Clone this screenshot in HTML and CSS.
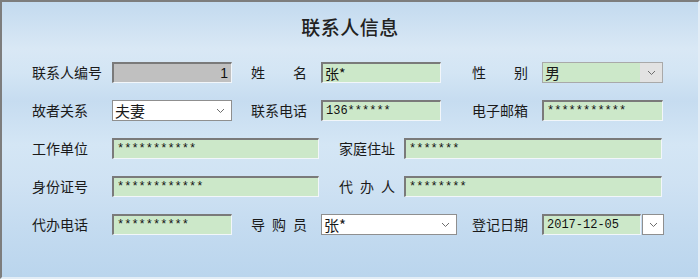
FILE: index.html
```html
<!DOCTYPE html>
<html lang="zh-CN">
<head>
  <meta charset="UTF-8" />
  <title>联系人信息</title>
  <link rel="stylesheet" href="styles.css">
</head>
<body>
  <div class="window">
    <h1 class="title">联系人信息</h1>

    <div class="form">
      <!-- ligne 1 -->
      <div class="row">
        <div class="c1">
          <span class="lbl">联系人编号</span>
          <input class="box gray num w120" type="text" value="1" readonly />
        </div>
        <div class="c2">
          <span class="lbl lbl2"><span class="jst">姓名</span></span>
          <input class="box green cjk w120" type="text" value="张*" readonly />
        </div>
        <div class="c3">
          <span class="lbl lbl2"><span class="jst">性别</span></span>
          <div class="combo green-combo w121">
            <span class="combo-text">男</span>
            <span class="combo-btn gray-btn">
              <svg width="9" height="6" viewBox="0 0 9 6"><path d="M1 1 L4.5 4.5 L8 1" fill="none" stroke="#6d6d6d" stroke-width="1"/></svg>
            </span>
          </div>
        </div>
      </div>

      <!-- ligne 2 -->
      <div class="row">
        <div class="c1">
          <span class="lbl">故者关系</span>
          <div class="combo white-combo w120">
            <span class="combo-text">夫妻</span>
            <span class="combo-btn">
              <svg width="9" height="6" viewBox="0 0 9 6"><path d="M1 1 L4.5 4.5 L8 1" fill="none" stroke="#6d6d6d" stroke-width="1"/></svg>
            </span>
          </div>
        </div>
        <div class="c2">
          <span class="lbl lbl2">联系电话</span>
          <input class="box green w120" type="text" value="136******" readonly />
        </div>
        <div class="c3">
          <span class="lbl lbl2">电子邮箱</span>
          <input class="box green w121" type="text" value="***********" readonly />
        </div>
      </div>

      <!-- ligne 3 -->
      <div class="row">
        <div class="cw">
          <span class="lbl">工作单位</span>
          <input class="box green w207" type="text" value="***********" readonly />
        </div>
        <div class="cw2">
          <span class="lbl lbl3">家庭住址</span>
          <input class="box green w258" type="text" value="*******" readonly />
        </div>
      </div>

      <!-- ligne 4 -->
      <div class="row">
        <div class="cw">
          <span class="lbl">身份证号</span>
          <input class="box green w207" type="text" value="************" readonly />
        </div>
        <div class="cw2">
          <span class="lbl lbl3"><span class="jst">代办人</span></span>
          <input class="box green w258" type="text" value="********" readonly />
        </div>
      </div>

      <!-- ligne 5 -->
      <div class="row">
        <div class="c1">
          <span class="lbl">代办电话</span>
          <input class="box green w120" type="text" value="**********" readonly />
        </div>
        <div class="c2">
          <span class="lbl lbl2"><span class="jst">导购员</span></span>
          <div class="combo white-combo w136">
            <span class="combo-text">张*</span>
            <span class="combo-btn">
              <svg width="9" height="6" viewBox="0 0 9 6"><path d="M1 1 L4.5 4.5 L8 1" fill="none" stroke="#6d6d6d" stroke-width="1"/></svg>
            </span>
          </div>
        </div>
        <div class="c3">
          <span class="lbl lbl2">登记日期</span>
          <input class="box green w99" type="text" value="2017-12-05" readonly />
          <span class="date-btn">
            <svg width="9" height="6" viewBox="0 0 9 6"><path d="M1 1 L4.5 4.5 L8 1" fill="none" stroke="#6d6d6d" stroke-width="1"/></svg>
          </span>
        </div>
      </div>
    </div>
  </div>
</body>
</html>
```

FILE: styles.css
```css
body {
  margin: 0;
  font-family: "Noto Sans CJK SC", "Liberation Sans", sans-serif;
  color: #1a1a1a;
}
.window {
  box-sizing: border-box;
  width: 700px;
  height: 279px;
  border-style: solid;
  border-width: 2px 2px 2px 2px;
  border-color: #7d7d7d #e3edf6 #e3edf6 #7d7d7d;
  background: linear-gradient(to bottom,
    #c3daef 0%, #d9e8f5 17%, #d3e5f4 26%, #c6dcf0 36%,
    #d4e6f5 52%, #cfe2f3 66%, #c4dbf0 82%, #bad5ed 100%);
}
.title {
  margin: 10px 0 0 0;
  height: 30px;
  line-height: 30px;
  text-align: center;
  font-size: 19px;
  font-weight: 500;
  color: #222;
  letter-spacing: 0.5px;
}
.form {
  margin-top: 20px;
  padding-left: 30px;
  display: flex;
  flex-direction: column;
  gap: 17px;
}
.row {
  display: flex;
  height: 21px;
  align-items: center;
}
.c1, .c2, .c3, .cw, .cw2 {
  display: flex;
  align-items: center;
  height: 21px;
}
.c1 { width: 219px; }
.c2 { width: 221px; }
.cw { width: 307px; }
.lbl {
  width: 80px;
  font-size: 14px;
  line-height: 21px;
  white-space: nowrap;
}
.lbl2 { width: 70px; }
.lbl3 { width: 65px; }
.jst {
  display: inline-block;
  width: 56px;
  text-align: justify;
  text-align-last: justify;
}
.box {
  box-sizing: border-box;
  height: 21px;
  margin: 0;
  padding: 0 3px;
  border-style: solid;
  border-width: 2px 1px 1px 2px;
  border-color: #7a7a7a #f2f6fa #f2f6fa #7a7a7a;
  font-family: "Liberation Mono", "Noto Sans CJK SC", monospace;
  font-size: 12px;
  color: #111;
  outline: none;
}
.green { background-color: #cce8c9; }
.gray { background-color: #c0c0c0; }
.num { text-align: right; font-family: "Liberation Sans", sans-serif; font-size: 14px; }
.cjk { font-family: "Noto Sans CJK SC", sans-serif; font-size: 14px; padding-left: 2px; }
.w99 { width: 99px; }
.w120 { width: 120px; }
.w121 { width: 121px; }
.w136 { width: 136px; }
.w207 { width: 207px; }
.w258 { width: 258px; }
.combo {
  box-sizing: border-box;
  height: 21px;
  display: flex;
  align-items: center;
  border: 1px solid #8f8f8f;
}
.white-combo { background-color: #fff; }
.green-combo { background-color: #cce8c9; border-color: #a9a9a9; }
.combo-text {
  flex: 1;
  padding-left: 2px;
  font-size: 15px;
  line-height: 19px;
}
.combo-btn {
  width: 22px;
  height: 19px;
  display: flex;
  align-items: center;
  justify-content: center;
}
.gray-btn { background-color: #e2e2e2; }
.date-btn {
  box-sizing: border-box;
  width: 22px;
  height: 21px;
  margin-left: 1px;
  display: flex;
  align-items: center;
  justify-content: center;
  background: #fff;
  border: 1px solid #8f8f8f;
}
```
